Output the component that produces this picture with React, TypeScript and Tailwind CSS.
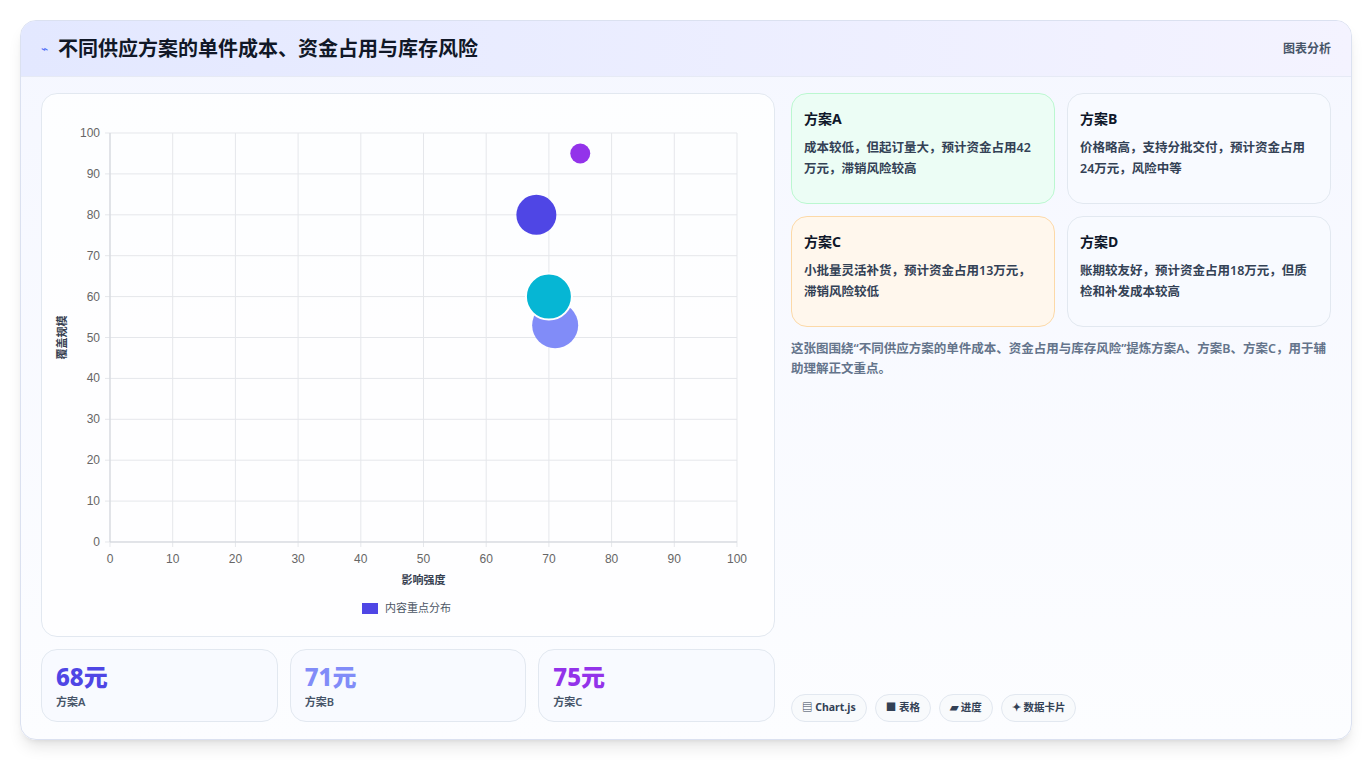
import React from "react";

const F = { fontFamily: '"Noto Sans","Noto Sans CJK SC",sans-serif' };
const X = (v: number) => 68 + v * 6.27;
const Y = (v: number) => 448 - v * 4.09;
const ticks = [0, 10, 20, 30, 40, 50, 60, 70, 80, 90, 100];

function Chart() {
  return (
    <svg width="734" height="543" className="block" style={{ fontFamily: '"Liberation Sans",Arial,sans-serif' }}>
      {ticks.map((t) => (
        <g key={t}>
          <line x1={X(t)} x2={X(t)} y1={Y(100)} y2={Y(0) + 5} stroke="#e5e7eb" />
          <line x1={X(0) - 5} x2={X(100)} y1={Y(t)} y2={Y(t)} stroke="#e5e7eb" />
          <text x={X(t)} y={469} fontSize="12" fill="#666" textAnchor="middle">{t}</text>
          <text x={X(0) - 10} y={Y(t) + 4} fontSize="12" fill="#666" textAnchor="end">{t}</text>
        </g>
      ))}
      <line x1={X(0)} x2={X(0)} y1={Y(100)} y2={Y(0)} stroke="#d1d5db" />
      <line x1={X(0)} x2={X(100)} y1={Y(0)} y2={Y(0)} stroke="#d1d5db" />
      <text x={X(50)} y={490} fontSize="11" fontWeight="bold" fill="#374151" textAnchor="middle" style={F}>影响强度</text>
      <text transform={`translate(24 ${Y(50)}) rotate(-90)`} fontSize="11" fontWeight="bold" fill="#374151" textAnchor="middle" style={F}>覆盖规模</text>
      <circle cx={X(71)} cy={Y(53)} r="23" fill="#818cf8" />
      <circle cx={X(70)} cy={Y(60)} r="23" fill="#06b6d4" stroke="#fff" strokeWidth="2" />
      <circle cx={X(68)} cy={Y(80)} r="20" fill="#4f46e5" />
      <circle cx={X(75)} cy={Y(95)} r="10" fill="#9333ea" />
      <rect x="320" y="509" width="16" height="11" fill="#4f46e5" />
      <text x="343" y="518" fontSize="11" fill="#4b5563" style={F}>内容重点分布</text>
    </svg>
  );
}

function Plan({ t, d, c }: { t: string; d: string; c: string }) {
  return (
    <div className={`rounded-2xl border pl-3 pr-3 py-3.5 h-[111px] ${c}`}>
      <div className="text-[14px] font-bold text-[#0f172a]">{t}</div>
      <div className="mt-2 text-[12.5px] font-semibold leading-[21px] text-[#334155]">{d}</div>
    </div>
  );
}

function Stat({ v, l, c }: { v: string; l: string; c: string }) {
  return (
    <div className="flex-1 rounded-2xl border border-[#e2e8f0] bg-[#f8faff] px-3.5 pt-3 h-[73px]">
      <div className={`text-[24px] font-extrabold leading-[30px] ${c}`}>{v}</div>
      <div className="text-[11px] font-semibold text-[#475569] mt-0.5">{l}</div>
    </div>
  );
}

export default function App() {
  return (
    <div className="w-[1372px] h-[760px] bg-white p-5" style={F}>
      <div className="w-full h-full rounded-2xl border border-[#dbe1f0] bg-gradient-to-b from-[#f5f7ff] to-[#fcfdff] shadow-lg overflow-hidden flex flex-col">
        <div className="h-[56px] shrink-0 flex items-center justify-between px-5 bg-gradient-to-r from-[#e3e8ff] to-[#f4f3ff] border-b border-[#e6eaf5]">
          <div className="flex items-center gap-2.5">
            <span className="text-[12px] text-[#4f6ef7]">⌁</span>
            <span className="text-[20px] font-bold text-[#111827]">不同供应方案的单件成本、资金占用与库存风险</span>
          </div>
          <span className="text-[12px] font-semibold text-[#475569]">图表分析</span>
        </div>
        <div className="flex gap-4 px-5 pt-4 pb-5 flex-1">
          <div className="w-[734px] flex flex-col gap-3">
            <div className="h-[544px] rounded-2xl border border-[#e2e8f0] bg-white/80">
              <Chart />
            </div>
            <div className="flex gap-3">
              <Stat v="68元" l="方案A" c="text-[#4f46e5]" />
              <Stat v="71元" l="方案B" c="text-[#818cf8]" />
              <Stat v="75元" l="方案C" c="text-[#9333ea]" />
            </div>
          </div>
          <div className="flex-1 flex flex-col">
            <div className="grid grid-cols-2 gap-3">
              <Plan t="方案A" d="成本较低，但起订量大，预计资金占用42万元，滞销风险较高" c="bg-[#ecfdf5] border-[#bbf7d0]" />
              <Plan t="方案B" d="价格略高，支持分批交付，预计资金占用24万元，风险中等" c="bg-[#f8faff] border-[#e2e8f0]" />
              <Plan t="方案C" d="小批量灵活补货，预计资金占用13万元，滞销风险较低" c="bg-[#fff7ed] border-[#fcd9a8]" />
              <Plan t="方案D" d="账期较友好，预计资金占用18万元，但质检和补发成本较高" c="bg-[#f8faff] border-[#e2e8f0]" />
            </div>
            <p className="mt-3 text-[12.5px] font-semibold leading-[20px] text-[#64748b]">
              这张图围绕“不同供应方案的单件成本、资金占用与库存风险”提炼方案A、方案B、方案C，用于辅助理解正文重点。
            </p>
            <div className="mt-auto flex gap-2">
              {["▤ Chart.js", "■ 表格", "▰ 进度", "✦ 数据卡片"].map((s) => (
                <span key={s} className="h-[28px] px-2.5 flex items-center rounded-full border border-[#e2e8f0] bg-[#f8fafc] text-[10.5px] font-bold text-[#334155]">{s}</span>
              ))}
            </div>
          </div>
        </div>
      </div>
    </div>
  );
}
